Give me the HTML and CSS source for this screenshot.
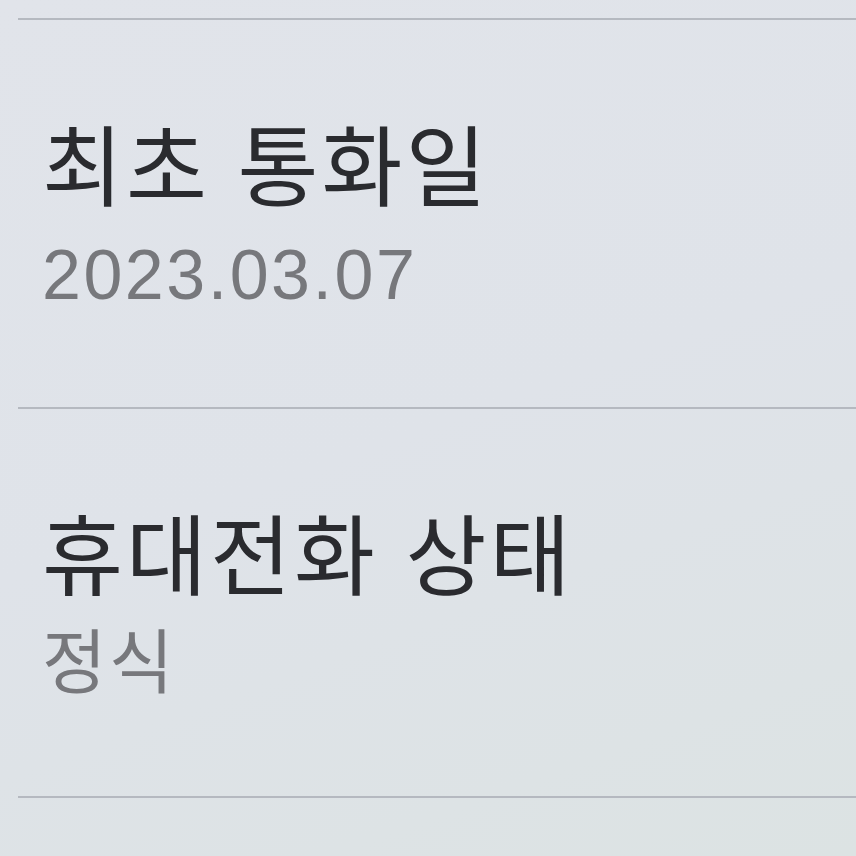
FILE: index.html
```html
<html lang="ko">
<head>
  <meta charset="UTF-8" />
  <meta name="viewport" content="width=device-width, initial-scale=1.0" />
  <title>휴대전화 정보</title>
  <link rel="stylesheet" href="styles.css">
</head>
<body>
  <div class="list">
    <div class="item">
      <div class="item-title">최초 통화일</div>
      <div class="item-value">2023.03.07</div>
    </div>
    <div class="item">
      <div class="item-title">휴대전화 상태</div>
      <div class="item-value">정식</div>
    </div>
  </div>
</body>
</html>
```

FILE: styles.css
```css
body {
  margin: 0;
  padding: 0;
  height: 856px;
  overflow: hidden;
  font-family: "Liberation Sans", "Noto Sans CJK KR", sans-serif;
  background: linear-gradient(160deg, #e1e4ea 0%, #dfe3e9 50%, #dce3e3 100%);
}

.list {
  margin-top: 18px;
  margin-left: 18px;
  border-top: 2px solid #b5b9c0;
}

.item {
  display: flex;
  flex-direction: column;
  gap: 19px;
  padding: 91px 0 87px 24px;
  border-bottom: 2px solid #b5b9c0;
}

.item-title {
  font-size: 88px;
  line-height: 100px;
  letter-spacing: 3px;
  color: #2a2b2f;
  font-family: "Noto Sans CJK KR", sans-serif;
}

.item-value {
  font-size: 70px;
  line-height: 90px;
  letter-spacing: 2.5px;
  color: #77787c;
}
```
